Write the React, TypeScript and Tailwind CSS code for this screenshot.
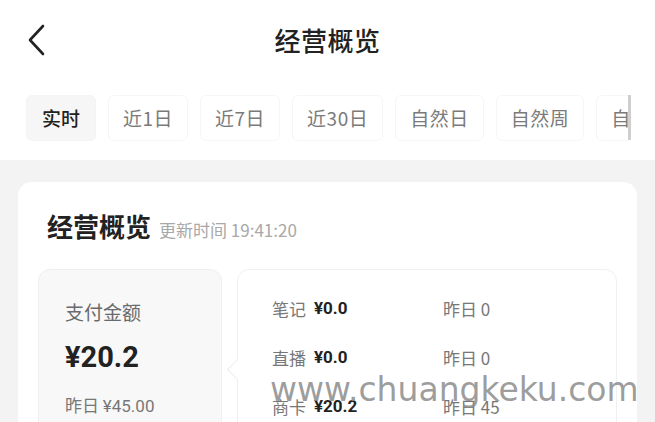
import React from 'react';

const tabs = ['实时', '近1日', '近7日', '近30日', '自然日', '自然周', '自然月'];

const rows = [
  { label: '笔记', value: '¥0.0', prev: '昨日 0' },
  { label: '直播', value: '¥0.0', prev: '昨日 0' },
  { label: '商卡', value: '¥20.2', prev: '昨日 45' },
];

const App: React.FC = () => {
  return (
    <div
      className="relative w-[655px] h-[422px] overflow-hidden bg-white text-[#222]"
      style={{ fontFamily: '"Noto Sans CJK SC", "Noto Sans", sans-serif' }}
    >
      {/* Header */}
      <div className="relative h-[80px] flex items-center justify-center">
        <svg className="absolute left-[24px] top-[23px]" width="24" height="34" viewBox="0 0 24 34" fill="none">
          <path d="M19 3 L6 17 L19 31" stroke="#222" strokeWidth="2.6" strokeLinecap="round" strokeLinejoin="round" />
        </svg>
        <div className="text-[26px] font-medium tracking-[0.5px] text-[#222] pb-[2px]">经营概览</div>
      </div>

      {/* Tabs */}
      <div className="relative h-[80px]">
        <div className="w-[628px] pt-[15px] pl-[26px] flex gap-[12px] overflow-hidden">
          {tabs.map((t, i) => (
            <div
              key={t}
              className={`h-[46px] shrink-0 flex items-center justify-center rounded-[6px] text-[19px] ${
                i === 0
                  ? 'px-[15px] bg-[#f6f6f6] text-[#222] font-medium border border-[#f4f4f4]'
                  : 'px-[14px] bg-white text-[#7a7a7a] border border-[#f6f6f6] tracking-[0.5px]'
              }`}
            >
              {t}
            </div>
          ))}
        </div>
        <div className="absolute left-[628px] top-[15px] w-[3px] h-[45px] bg-[#cfcfcf]" />
      </div>

      {/* Body */}
      <div className="bg-[#f3f3f3] h-[262px] px-[18px] pt-[22px]">
        <div className="bg-white rounded-[14px] h-[300px] px-[20px] pt-[24px]">
          <div className="flex items-baseline gap-[8px] pl-[9px]">
            <span className="text-[26px] font-bold text-[#222]">经营概览</span>
            <span className="text-[17px] text-[#a8a8a8]">更新时间 19:41:20</span>
          </div>

          <div className="flex gap-[15px] mt-[24px]">
            <div className="w-[184px] h-[200px] shrink-0 rounded-[12px] bg-[#f8f8f8] border border-[#efefef] pl-[26px] pt-[27px]">
              <div className="text-[19px] text-[#6a6a6a] leading-[30px]">支付金额</div>
              <div
                className="text-[29px] font-bold text-[#222] leading-[40px] mt-[10px]"
                style={{ fontFamily: '"Roboto", "Noto Sans CJK SC", sans-serif' }}
              >
                ¥20.2
              </div>
              <div className="text-[17px] text-[#777] leading-[26px] mt-[15px]">
                昨日 <span style={{ fontFamily: '"Roboto", sans-serif' }}>¥45.00</span>
              </div>
            </div>

            <div className="relative flex-1 h-[200px] rounded-[12px] bg-white border border-[#f0f0f0] pl-[34px] pt-[14px]">
              <div className="absolute left-[-8px] top-[92px] w-[15px] h-[15px] rotate-45 bg-white border-l border-b border-[#ececec]" />
              {rows.map((r) => (
                <div key={r.label} className="flex items-center h-[49px] text-[17px]">
                  <div className="w-[171px] flex items-center gap-[8px]">
                    <span className="text-[#777]">{r.label}</span>
                    <span className="font-bold text-[#222]" style={{ fontFamily: '"Roboto", sans-serif' }}>
                      {r.value}
                    </span>
                  </div>
                  <span className="text-[#777]">{r.prev}</span>
                </div>
              ))}
            </div>
          </div>
        </div>
      </div>

      {/* Watermark */}
      <div
        className="absolute left-[270px] top-[370px] text-[33px] leading-[40px] text-[#8c8c8c]/85 font-medium whitespace-nowrap"
        style={{ fontFamily: '"DejaVu Sans", sans-serif' }}
      >
        www.chuangkeku.com
      </div>
    </div>
  );
};

export default App;
